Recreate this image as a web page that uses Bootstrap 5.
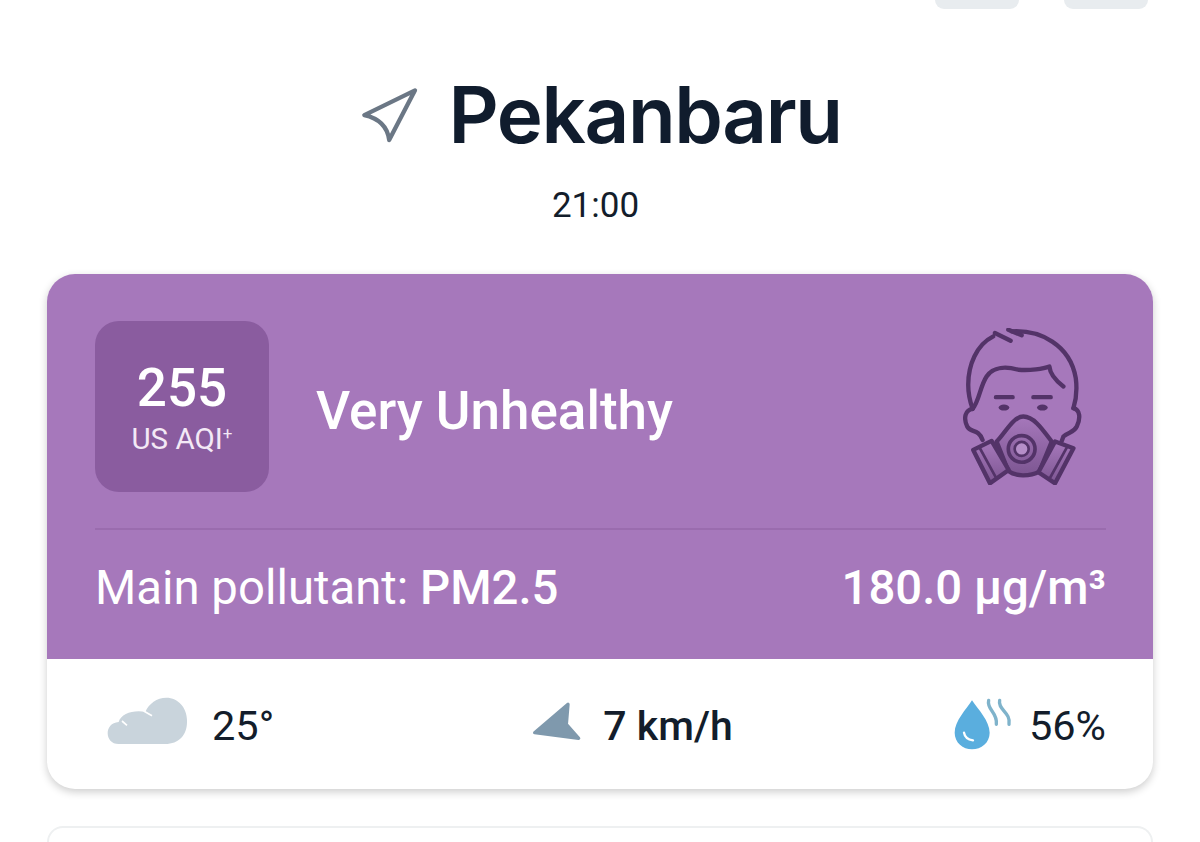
<!DOCTYPE html>
<html lang="en">

<head>
    <meta charset="UTF-8">
    <meta name="viewport" content="width=device-width, initial-scale=1.0">
    <title>Pekanbaru air quality</title>
    <link href="https://cdn.jsdelivr.net/npm/bootstrap@5.3.0/dist/css/bootstrap.min.css" rel="stylesheet">
    <style>
        html, body {
            height: 842px;
            overflow: hidden;
        }

        body {
            font-family: Roboto, "Liberation Sans", sans-serif;
            color: #131d2b;
            background: #fff;
        }

        .top-pills {
            height: 9px;
            padding-right: 52px;
            gap: 45px;
        }

        .top-pill {
            width: 84px;
            height: 9px;
            background: #e8ecef;
            border-radius: 0 0 26px 26px;
        }

        .city-row {
            margin-top: 58px;
            height: 96px;
            gap: 29px;
            padding-left: 3px;
        }

        .city-name {
            font-family: Inter, Roboto, sans-serif;
            font-size: 78px;
            font-weight: 600;
            line-height: 96px;
            letter-spacing: -1.4px;
            color: #101c2d;
            margin: 0;
        }

        .time-text {
            font-size: 35px;
            line-height: 40px;
            margin-top: 23px;
            padding-right: 9px;
        }

        .aqi-card {
            margin: 48px 47px 0;
            border-radius: 28px;
            overflow: hidden;
            background: #fff;
            box-shadow: 0 3px 9px rgba(0, 0, 0, .2);
        }

        .aqi-top {
            background: #a678bb;
            color: #fff;
            padding: 47px 47px 0 48px;
            height: 385px;
        }

        .aqi-head {
            height: 209px;
            padding-top: 1px;
            padding-bottom: 37px;
            border-bottom: 2px solid #9a6cae;
        }

        .aqi-box {
            width: 174px;
            height: 171px;
            background: #8a5c9f;
            border-radius: 24px;
        }

        .aqi-num {
            font-size: 53px;
            font-weight: 500;
            line-height: 58px;
        }

        .aqi-label {
            font-size: 29.5px;
            line-height: 32px;
            margin-top: 6px;
            color: #f3e9f6;
        }

        .aqi-label sup {
            font-size: 17px;
            top: -.55em;
        }

        .aqi-status {
            font-size: 53px;
            font-weight: 500;
            margin-left: 47px;
            margin-top: 8px;
            line-height: 60px;
        }

        .mask-icon {
            margin-right: 24px;
        }

        .aqi-pollutant {
            font-size: 47.3px;
            line-height: 50px;
            padding-top: 33px;
        }

        .weather-row {
            height: 130px;
            padding: 0 47px 0 60px;
        }

        .weather-item {
            font-size: 41.5px;
            font-weight: 400;
            line-height: 44px;
        }

        .weather-item span {
            padding-top: 3px;
        }

        .weather-icon {
            margin-bottom: 7px;
        }

        .drop-icon {
            margin-bottom: 3px;
        }

        .wind-item {
            margin-left: 38px;
            font-size: 41px;
            font-weight: 500;
        }

        .wind-gap {
            gap: 21px;
        }

        .next-card {
            margin: 37px 47px 0;
            height: 16px;
            border: 2px solid #eef0f1;
            border-bottom: 0;
            border-radius: 28px 28px 0 0;
        }
    </style>
</head>

<body>
    <div class="top-pills d-flex justify-content-end">
        <div class="top-pill"></div>
        <div class="top-pill"></div>
    </div>

    <div class="city-row d-flex justify-content-center align-items-center">
        <svg width="58" height="57" viewBox="65 65 175 172" fill="none" stroke="#6b7785" stroke-width="13" stroke-linejoin="round">
            <path d="M228 75 L75 150 C120 160 145 185 150 225 Z" />
        </svg>
        <h1 class="city-name">Pekanbaru</h1>
    </div>
    <div class="time-text text-center">21:00</div>

    <div class="aqi-card">
        <div class="aqi-top">
            <div class="aqi-head d-flex align-items-center">
                <div class="aqi-box d-flex flex-column align-items-center justify-content-center">
                    <div class="aqi-num">255</div>
                    <div class="aqi-label">US AQI<sup>+</sup></div>
                </div>
                <div class="aqi-status flex-grow-1">Very Unhealthy</div>
                <svg class="mask-icon" width="119" height="157" viewBox="100 50 355 470" fill="none" stroke="#533368" stroke-width="13" stroke-linecap="round" stroke-linejoin="round">
                    <defs>
                        <linearGradient id="maskFill" x1="0" y1="0" x2="0" y2="1">
                            <stop offset="0" stop-color="#a678bb" />
                            <stop offset="1" stop-color="#7d5692" />
                        </linearGradient>
                    </defs>
                    <path d="M195 65 L242 88 M235 55 L275 72" />
                    <path d="M245 60 C330 55 420 100 437 200 C442 240 438 265 430 290" />
                    <path d="M190 75 C140 100 115 160 115 220 C115 250 122 275 128 292" />
                    <path d="M128 292 C148 270 150 225 170 195 C190 165 230 165 265 175 C300 178 340 172 358 165 C360 190 380 210 400 225" />
                    <path d="M430 290 C450 295 452 320 440 345 C430 365 415 360 400 375 L395 388" />
                    <path d="M128 292 C106 295 100 320 112 345 C122 365 145 350 158 385" />
                    <path d="M198 257 H248 M310 257 H362" />
                    <ellipse cx="222" cy="288" rx="16" ry="9" fill="#533368" stroke="none" />
                    <ellipse cx="337" cy="288" rx="16" ry="9" fill="#533368" stroke="none" />
                    <path d="M200 390 C225 365 250 315 280 315 C310 315 335 350 365 390 L328 480 C300 495 255 495 235 478 Z" fill="url(#maskFill)" />
                    <path d="M130 415 L185 388 L236 475 L180 515 Z" fill="url(#maskFill)" />
                    <path d="M375 390 L430 410 L375 515 L325 482 Z" fill="url(#maskFill)" />
                    <path d="M150 410 L198 498 M410 408 L358 502" stroke-width="8" />
                    <circle cx="275" cy="412" r="40" stroke-width="11" />
                    <circle cx="275" cy="412" r="21" stroke-width="8" fill="#b58ec8" />
                </svg>
            </div>
            <div class="aqi-pollutant d-flex justify-content-between">
                <div>Main pollutant: <span class="fw-medium">PM2.5</span></div>
                <div class="fw-medium">180.0 µg/m³</div>
            </div>
        </div>
        <div class="weather-row d-flex justify-content-between align-items-center">
            <div class="weather-item d-flex align-items-center gap-4">
                <svg class="weather-icon" width="81" height="48" viewBox="50 50 243 144">
                    <path d="M85 191 C42 191 40 128 85 125 C92 100 130 88 165 95 C175 70 200 52 228 52 C265 52 292 85 290 125 C290 165 265 191 225 191 Z" fill="#c9d4dc" />
                    <path d="M95 122 L110 135 M160 92 L185 106" stroke="#fff" stroke-width="5" fill="none" />
                </svg>
                <span>25°</span>
            </div>
            <div class="weather-item wind-item wind-gap d-flex align-items-center">
                <svg class="weather-icon" width="50" height="40" viewBox="40 55 150 120">
                    <path d="M48 150 L148 65 L143 125 L180 167 Z" fill="#7f99ad" stroke="#7f99ad" stroke-width="10" stroke-linejoin="round" />
                </svg>
                <span>7 km/h</span>
            </div>
            <div class="weather-item d-flex align-items-center gap-3">
                <svg class="drop-icon" width="60" height="54" viewBox="65 45 180 162">
                    <path d="M122 58 C105 85 70 120 70 155 C70 185 95 205 122 205 C150 205 175 185 175 155 C175 120 140 85 122 58 Z" fill="#5aaede" />
                    <path d="M98 155 C100 168 110 176 125 178" stroke="#fff" stroke-width="7" fill="none" stroke-linecap="round" />
                    <path d="M172 58 C165 85 200 95 195 130 M205 58 C198 85 240 95 233 130" stroke="#7fb3cb" stroke-width="10" fill="none" stroke-linecap="round" />
                </svg>
                <span>56%</span>
            </div>
        </div>
    </div>

    <div class="next-card"></div>

    <script src="https://cdn.jsdelivr.net/npm/bootstrap@5.3.0/dist/js/bootstrap.bundle.min.js"></script>
</body>

</html>
